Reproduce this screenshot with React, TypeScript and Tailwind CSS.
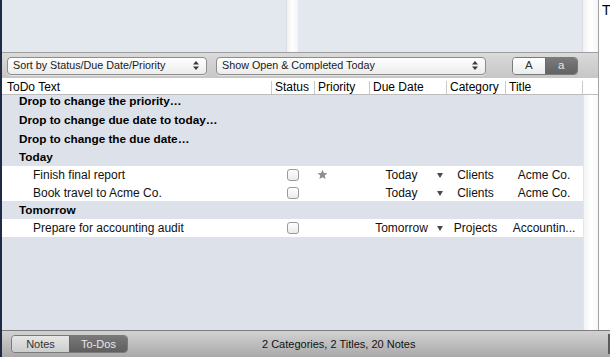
import React from 'react';

const cols = 'grid grid-cols-[269px_43px_55px_77px_59px_78px]';

const UpDown: React.FC = () => (
    <svg width="6" height="9" viewBox="0 0 6 9" className="shrink-0">
        <polygon points="3,0 6,3.5 0,3.5" fill="#3a3a3a" />
        <polygon points="0,5.5 6,5.5 3,9" fill="#3a3a3a" />
    </svg>
);

const PopUp: React.FC<{ label: string; width: string }> = ({ label, width }) => (
    <div
        className={`${width} h-[18px] rounded-[4px] border border-[#8d8d8d] bg-gradient-to-b from-white to-[#ececec] flex items-center pl-[5px] pr-[7px] text-[10.75px] text-[#1a1a1a] shadow-[0_1px_0_rgba(255,255,255,0.5)]`}
    >
        <span className="flex-1 whitespace-nowrap">{label}</span>
        <UpDown />
    </div>
);

const Checkbox: React.FC = () => (
    <div className="w-[12px] h-[12px] rounded-[3px] border border-[#9a9a9a] bg-gradient-to-b from-white to-[#ebebeb]" />
);

const Caret: React.FC = () => (
    <svg width="6" height="5" viewBox="0 0 6 5">
        <polygon points="0,0 6,0 3,5" fill="#4a4a4a" />
    </svg>
);

const Star: React.FC = () => (
    <svg width="11" height="11" viewBox="0 0 24 24">
        <polygon
            points="12,1.5 15.1,8.6 22.8,9.3 17,14.4 18.7,22 12,18 5.3,22 7,14.4 1.2,9.3 8.9,8.6"
            fill="#8e8e8e"
        />
    </svg>
);

type Todo = { text: string; star: boolean; due: string; category: string; title: string };

const GroupRow: React.FC<{ label: string; h: string }> = ({ label, h }) => (
    <div className={`${h} flex items-center pl-[17px] text-[11.75px] font-bold text-black whitespace-nowrap`}>
        {label}
    </div>
);

const TodoRow: React.FC<{ todo: Todo; h: string }> = ({ todo, h }) => (
    <div className={`${cols} ${h} bg-white items-center text-[12px] text-[#111]`}>
        <div className="pl-[31px] whitespace-nowrap">{todo.text}</div>
        <div className="flex justify-center">
            <Checkbox />
        </div>
        <div className="pl-[3px] flex items-center -mt-[2px]">{todo.star ? <Star /> : null}</div>
        <div className="flex items-center">
            <span className="flex-1 text-center">{todo.due}</span>
            <span className="w-[12px] flex justify-center pr-[1px]">
                <Caret />
            </span>
        </div>
        <div className="text-center">{todo.category}</div>
        <div className="text-center whitespace-nowrap">{todo.title}</div>
    </div>
);

const headers = ['Status', 'Priority', 'Due Date', 'Category', 'Title'];

export default function App() {
    return (
        <div className="w-[610px] h-[357px] flex overflow-hidden bg-white font-['Liberation_Sans',Arial,sans-serif]">
            <div className="w-[2px] shrink-0 bg-[#1e2b45]" />
            <div className="flex-1 flex flex-col min-w-0">
                <div className="flex flex-1 min-h-0">
                    <div className="w-[596px] shrink-0 flex flex-col">
                        {/* top panes */}
                        <div className="h-[52px] flex shrink-0">
                            <div className="w-[284px] bg-[#e3e7ee]" />
                            <div className="w-[12px] border-l border-[#d9dde3] bg-gradient-to-r from-[#f1f1f1] via-white to-[#f3f3f3]" />
                            <div className="w-[284px] bg-[#e3e7ee]" />
                            <div className="w-[16px] border-l border-[#d9dde3] bg-gradient-to-r from-[#f1f1f1] via-white to-[#f6f6f6]" />
                        </div>

                        {/* toolbar */}
                        <div className="h-[26px] shrink-0 border-t border-[#9e9e9e] bg-gradient-to-b from-[#dadada] to-[#c6c6c6] flex items-center pl-[5px]">
                            <PopUp label="Sort by Status/Due Date/Priority" width="w-[200px]" />
                            <div className="w-[9px]" />
                            <PopUp label="Show Open & Completed Today" width="w-[270px]" />
                            <div className="w-[26px]" />
                            <div className="w-[66px] h-[18px] rounded-[4px] border border-[#7a7a7a] flex overflow-hidden text-[11.5px]">
                                <div className="flex-1 bg-gradient-to-b from-white to-[#ececec] flex items-center justify-center text-[#333]">
                                    A
                                </div>
                                <div className="flex-1 border-l border-[#6a6a6a] bg-gradient-to-b from-[#7a7a7a] to-[#636363] flex items-center justify-center text-[#e6e6e6]">
                                    a
                                </div>
                            </div>
                        </div>

                        {/* header */}
                        <div className="h-[17px] shrink-0 bg-white border-b border-[#bdbdbd] flex">
                            <div className={`${cols} text-[12px] text-black items-center`}>
                                <div className="pl-[5px]">ToDo Text</div>
                                {headers.map((h, i) => (
                                    <div
                                        key={h}
                                        className={`border-l border-[#c9c9c9] pl-[3px] h-[13px] flex items-center ${i === headers.length - 1 ? 'border-r' : ''}`}
                                    >
                                        {h}
                                    </div>
                                ))}
                            </div>
                        </div>

                        {/* body */}
                        <div className="flex-1 flex min-h-0">
                            <div className="w-[581px] bg-[#dde2ea] overflow-hidden">
                                <div className="-mt-[4px]">
                                    <GroupRow label="Drop to change the priority…" h="h-[19px]" />
                                    <GroupRow label="Drop to change due date to today…" h="h-[19px]" />
                                    <GroupRow label="Drop to change the due date…" h="h-[19px]" />
                                    <GroupRow label="Today" h="h-[18px]" />
                                    <TodoRow
                                        h="h-[18px]"
                                        todo={{ text: 'Finish final report', star: true, due: 'Today', category: 'Clients', title: 'Acme Co.' }}
                                    />
                                    <TodoRow
                                        h="h-[17px]"
                                        todo={{ text: 'Book travel to Acme Co.', star: false, due: 'Today', category: 'Clients', title: 'Acme Co.' }}
                                    />
                                    <GroupRow label="Tomorrow" h="h-[18px]" />
                                    <TodoRow
                                        h="h-[18px]"
                                        todo={{ text: 'Prepare for accounting audit', star: false, due: 'Tomorrow', category: 'Projects', title: 'Accountin...' }}
                                    />
                                </div>
                            </div>
                            <div className="w-[15px] border-l border-[#e2e4e8] bg-gradient-to-r from-[#f3f3f3] via-white to-[#f7f7f7]" />
                        </div>
                    </div>
                    <div className="flex-1 border-l border-[#a3a3a3] bg-white pl-[3px] pt-[3px] text-[14px] leading-none text-black overflow-visible">
                        T
                    </div>
                </div>

                {/* bottom bar */}
                <div className="h-[27px] shrink-0 border-t border-[#7c7c7c] bg-gradient-to-b from-[#d2d2d2] to-[#a9a9a9] flex items-center pl-[9px]">
                    <div className="w-[117px] h-[18px] rounded-[4px] border border-[#7a7a7a] flex overflow-hidden text-[11px]">
                        <div className="flex-1 bg-gradient-to-b from-[#e6e6e6] to-[#cdcdcd] flex items-center justify-center text-[#333]">
                            Notes
                        </div>
                        <div className="flex-1 border-l border-[#666] bg-gradient-to-b from-[#787878] to-[#5f5f5f] flex items-center justify-center text-[#e8e8e8]">
                            To-Dos
                        </div>
                    </div>
                    <div className="ml-[134px] text-[11px] text-[#111] whitespace-nowrap">2 Categories, 2 Titles, 20 Notes</div>
                    <div className="ml-auto w-[2px] h-[20px] bg-[#5a5a5a]" />
                </div>
            </div>
        </div>
    );
}
